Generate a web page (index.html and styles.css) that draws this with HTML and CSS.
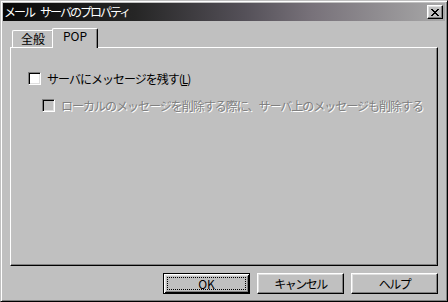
FILE: index.html
```html
<!DOCTYPE html>
<html lang="ja">
<head>
<meta charset="utf-8">
<title>メール サーバのプロパティ</title>
<link rel="stylesheet" href="styles.css">
</head>
<body>
<div class="window">
  <div class="titlebar">
    <span class="title">メール<span class="sp"> </span>サーバのプロパティ</span>
    <button class="close" aria-label="閉じる">
      <svg width="8" height="7" viewBox="0 0 8 7" shape-rendering="crispEdges"><path d="M0 0h2v1H0zM6 0h2v1H6zM1 1h2v1H1zM5 1h2v1H5zM2 2h4v1H2zM3 3h2v1H3zM2 4h4v1H2zM1 5h2v1H1zM5 5h2v1H5zM0 6h2v1H0zM6 6h2v1H6z" fill="#000"/></svg>
    </button>
  </div>
  <div class="content">
    <div class="tabs">
      <div class="tab">全般</div>
      <div class="tab selected">POP</div>
    </div>
    <div class="panel">
      <div class="check">
        <span class="box"></span>
        <span class="label">サーバにメッセージを残す(<u>L</u>)</span>
      </div>
      <div class="check sub disabled">
        <span class="box"></span>
        <span class="label">ローカルのメッセージを削除する際に、サーバ上のメッセージも削除する</span>
      </div>
    </div>
    <div class="buttons">
      <button class="btn default">OK</button>
      <button class="btn">キャンセル</button>
      <button class="btn">ヘルプ</button>
    </div>
  </div>
</div>
</body>
</html>
```

FILE: styles.css
```css
* { box-sizing: border-box; }
html, body { margin: 0; padding: 0; }
body {
  width: 448px;
  height: 302px;
  overflow: hidden;
  background: #c0c0c0;
  font-family: "Noto Sans CJK JP", sans-serif;
  font-size: 12px;
  color: #000;
}
.window {
  width: 448px;
  height: 302px;
  border: 1px solid;
  border-color: #c0c0c0 #000 #000 #c0c0c0;
  box-shadow: inset 1px 1px #fff, inset -1px -1px #808080;
  padding: 2px;
  display: flex;
  flex-direction: column;
  background: #c0c0c0;
}
.titlebar {
  height: 18px;
  flex: none;
  display: flex;
  align-items: center;
  justify-content: space-between;
  padding: 0 2px 0 1px;
  background: linear-gradient(to right, #080808 0%, #262626 30%, #555159 55%, #78727a 70%, #a8a8a8 100%);
  color: #fff;
}
.title {
  font-size: 12px;
  line-height: 18px;
  letter-spacing: -2px;
  white-space: pre;
}
.title .sp {
  display: inline-block;
  width: 6px;
}
.close {
  width: 16px;
  height: 14px;
  padding: 0;
  margin: 0;
  border: 1px solid;
  border-color: #fff #000 #000 #fff;
  box-shadow: inset -1px -1px #808080, inset 1px 1px #dfdfdf;
  background: #c0c0c0;
  display: flex;
  align-items: center;
  justify-content: center;
}
.close svg { display: block; }
.content {
  flex: 1;
  display: flex;
  flex-direction: column;
  padding: 7px 7px 5px 7px;
}
.tabs {
  height: 19px;
  flex: none;
  display: flex;
  align-items: flex-end;
  padding-left: 2px;
}
.tab {
  width: 42px;
  height: 17px;
  border-left: 1px solid #fff;
  border-top: 1px solid #fff;
  border-right: 1px solid #000;
  border-radius: 2px 2px 0 0;
  box-shadow: inset -1px 0 #808080;
  text-align: center;
  line-height: 15px;
  font-size: 12px;
  background: #c0c0c0;
}
.tab.selected {
  width: 46px;
  height: 20px;
  margin-left: -2px;
  margin-bottom: -1px;
  position: relative;
  z-index: 1;
  line-height: 14px;
}
.panel {
  height: 219px;
  flex: none;
  border: 1px solid;
  border-color: #fff #000 #000 #fff;
  box-shadow: inset -1px -1px #808080;
  padding: 24px 0 0 17px;
}
.check {
  display: flex;
  align-items: center;
  height: 13px;
  gap: 6px;
}
.check.sub {
  margin-top: 14px;
  margin-left: 14px;
}
.box {
  width: 13px;
  height: 13px;
  flex: none;
  border: 1px solid;
  border-color: #808080 #fff #fff #808080;
  box-shadow: inset 1px 1px #000, inset -1px -1px #dfdfdf;
  background: #fff;
}
.label {
  line-height: 13px;
  letter-spacing: -1px;
  white-space: nowrap;
}
.label u { text-underline-offset: 1px; }
.disabled .box { background: #c0c0c0; }
.disabled .label {
  color: #808080;
  text-shadow: 1px 1px 0 #fff;
}
.buttons {
  height: 21px;
  margin-top: 7px;
  flex: none;
  display: flex;
  justify-content: flex-end;
  gap: 7px;
}
.btn {
  width: 87px;
  height: 21px;
  margin: 0;
  padding: 0;
  border: 1px solid;
  border-color: #fff #000 #000 #fff;
  box-shadow: inset -1px -1px #808080, inset 1px 1px #dfdfdf;
  background: #c0c0c0;
  font-family: inherit;
  font-size: 12px;
  letter-spacing: -1.5px;
  line-height: 17px;
  color: #000;
}
.btn.default {
  border: 1px solid #000;
  box-shadow: inset 1px 1px #fff, inset -1px -1px #000, inset 2px 2px #dfdfdf, inset -2px -2px #808080;
  outline: 1px dotted #000;
  outline-offset: -5px;
  letter-spacing: 0;
}
```
